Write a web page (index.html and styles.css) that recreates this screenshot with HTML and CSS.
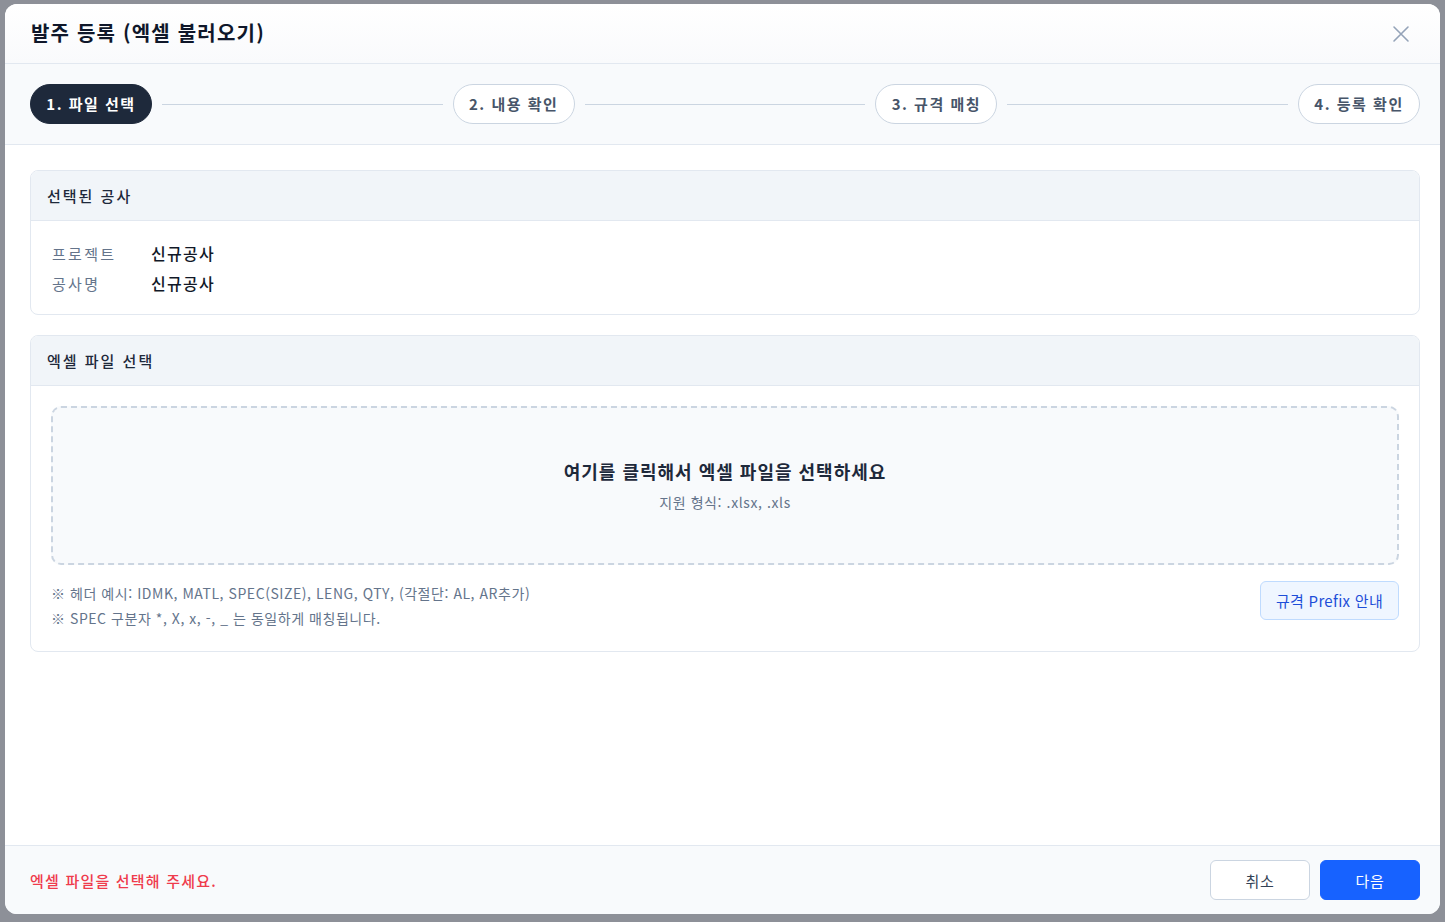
FILE: index.html
```html
<!DOCTYPE html>
<html lang="ko">
<head>
  <meta charset="UTF-8">
  <title>발주 등록 (엑셀 불러오기)</title>
  <link rel="stylesheet" href="styles.css">
</head>
<body>

<div class="modal">

  <!-- Header -->
  <div class="modal-header">
    <h1>발주 등록 (엑셀 불러오기)</h1>
    <button class="close-btn" aria-label="닫기">
      <svg width="18" height="18" viewBox="0 0 18 18" fill="none" stroke="#94a3b8" stroke-width="1.6" stroke-linecap="round">
        <path d="M2 2 L16 16 M16 2 L2 16"/>
      </svg>
    </button>
  </div>

  <!-- Steps -->
  <div class="steps">
    <span class="step active">1. 파일 선택</span>
    <span class="step-line"></span>
    <span class="step">2. 내용 확인</span>
    <span class="step-line"></span>
    <span class="step">3. 규격 매칭</span>
    <span class="step-line"></span>
    <span class="step">4. 등록 확인</span>
  </div>

  <!-- Body -->
  <div class="modal-body">

    <div class="section">
      <div class="section-title">선택된 공사</div>
      <div class="section-content info">
        <div class="info-row">
          <span class="info-label">프로젝트</span>
          <span class="info-value">신규공사</span>
        </div>
        <div class="info-row">
          <span class="info-label">공사명</span>
          <span class="info-value">신규공사</span>
        </div>
      </div>
    </div>

    <div class="section">
      <div class="section-title">엑셀 파일 선택</div>
      <div class="section-content">
        <div class="dropzone">
          <div class="drop-title">여기를 클릭해서 엑셀 파일을 선택하세요</div>
          <div class="drop-sub">지원 형식: .xlsx, .xls</div>
        </div>
        <div class="notes-row">
          <div class="notes">
            <div>※ 헤더 예시: IDMK, MATL, SPEC(SIZE), LENG, QTY, (각절단: AL, AR추가)</div>
            <div>※ SPEC 구분자 *, X, x, -, _ 는 동일하게 매칭됩니다.</div>
          </div>
          <button class="prefix-btn">규격 Prefix 안내</button>
        </div>
      </div>
    </div>

  </div>

  <!-- Footer -->
  <div class="modal-footer">
    <span class="error-msg">엑셀 파일을 선택해 주세요.</span>
    <div class="footer-btns">
      <button class="btn btn-cancel">취소</button>
      <button class="btn btn-primary">다음</button>
    </div>
  </div>

</div>

</body>
</html>
```

FILE: styles.css
```css
* {
  box-sizing: border-box;
}
body {
  margin: 0;
  height: 922px;
  overflow: hidden;
  background: #8d9098;
  font-family: "Noto Sans CJK KR", "Noto Sans", sans-serif;
  color: #0f172a;
}
button {
  font-family: inherit;
  cursor: pointer;
}
.modal {
  margin: 4px 0 0 5px;
  width: 1435px;
  height: 910px;
  background: white;
  border-radius: 12px;
  overflow: hidden;
  display: flex;
  flex-direction: column;
}
.modal-header {
  height: 60px;
  flex-shrink: 0;
  display: flex;
  align-items: center;
  justify-content: space-between;
  padding: 0 30px 0 26px;
  border-bottom: 1px solid #e2e8f0;
  background: linear-gradient(#ffffff, #f9fafc);
}
.modal-header h1 {
  margin: 0 0 2px;
  font-size: 20px;
  font-weight: 700;
  color: #0f172a;
  letter-spacing: 1.2px;
}
.close-btn {
  background: none;
  border: none;
  padding: 0;
  width: 18px;
  height: 18px;
  display: flex;
}
.steps {
  height: 81px;
  flex-shrink: 0;
  display: flex;
  align-items: center;
  padding: 0 20px 0 25px;
  background: #f8fafc;
  border-bottom: 1px solid #e2e8f0;
}
.step {
  width: 122px;
  height: 40px;
  flex-shrink: 0;
  display: flex;
  align-items: center;
  justify-content: center;
  border-radius: 20px;
  border: 1px solid #cbd5e1;
  background: white;
  color: #475569;
  font-size: 15px;
  font-weight: 700;
  letter-spacing: 1.5px;
  padding-bottom: 1px;
}
.step.active {
  background: #1e293b;
  border-color: #1e293b;
  color: white;
}
.step-line {
  flex: 1;
  height: 1px;
  background: #cbd5e1;
  margin: 0 10px;
}
.modal-body {
  flex: 1;
  padding: 25px 20px 0 25px;
  display: flex;
  flex-direction: column;
  gap: 20px;
}
.section {
  border: 1px solid #e2e8f0;
  border-radius: 8px;
  overflow: hidden;
}
.section-title {
  height: 50px;
  display: flex;
  align-items: center;
  padding: 0 16px;
  background: #f1f5f9;
  border-bottom: 1px solid #e2e8f0;
  font-size: 15px;
  font-weight: 500;
  color: #1e293b;
  letter-spacing: 2px;
}
.section-content {
  padding: 20px;
}
.section-content.info {
  padding: 17px 20px 16px 21px;
}
.info-row {
  display: flex;
  align-items: center;
  height: 30px;
}
.info-label {
  width: 99px;
  font-size: 15px;
  color: #64748b;
  letter-spacing: 2.3px;
}
.info-value {
  font-size: 16px;
  font-weight: 500;
  color: #111827;
  letter-spacing: 1.3px;
}
.dropzone {
  height: 159px;
  border: 2px dashed #cbd5e1;
  border-radius: 10px;
  background: #f8fafc;
  display: flex;
  flex-direction: column;
  align-items: center;
  justify-content: center;
}
.drop-title {
  font-size: 18px;
  font-weight: 700;
  color: #1e293b;
  line-height: 26px;
  letter-spacing: 1px;
}
.drop-sub {
  font-size: 14px;
  color: #64748b;
  line-height: 22px;
  margin-top: 7px;
  letter-spacing: 0.6px;
}
.notes-row {
  display: flex;
  justify-content: space-between;
  align-items: flex-start;
  margin-top: 16px;
}
.notes {
  font-size: 14px;
  color: #64748b;
  line-height: 25px;
  letter-spacing: 0.55px;
}
.prefix-btn {
  width: 139px;
  height: 39px;
  border-radius: 6px;
  border: 1px solid #bfdbfe;
  background: #eff6ff;
  color: #1d4ed8;
  font-size: 15px;
  letter-spacing: 0.3px;
}
.modal-footer {
  height: 69px;
  flex-shrink: 0;
  display: flex;
  align-items: center;
  justify-content: space-between;
  padding: 0 20px 0 25px;
  background: #f8fafc;
  border-top: 1px solid #e2e8f0;
}
.error-msg {
  font-size: 15px;
  font-weight: 500;
  color: #ef3b4c;
  letter-spacing: 1.2px;
}
.footer-btns {
  display: flex;
  gap: 10px;
}
.btn {
  width: 100px;
  height: 40px;
  border-radius: 6px;
  font-size: 15px;
  letter-spacing: 0.8px;
}
.btn-cancel {
  background: white;
  border: 1px solid #cbd5e1;
  color: #334155;
}
.btn-primary {
  background: #1762ff;
  border: 1px solid #1762ff;
  color: white;
}
```
